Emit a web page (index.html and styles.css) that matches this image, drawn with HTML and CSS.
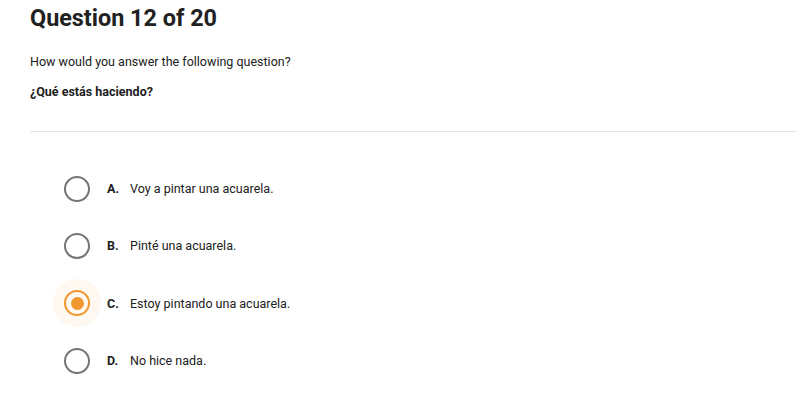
FILE: index.html
```html
<!DOCTYPE html>
<html lang="en">
<head>
<meta charset="utf-8">
<title>Question 12 of 20</title>
<link rel="stylesheet" href="styles.css">
</head>
<body>
<main class="page">
  <h1 class="title">Question 12 of 20</h1>
  <p class="prompt">How would you answer the following question?</p>
  <p class="question">¿Qué estás haciendo?</p>
  <hr class="divider">
  <ul class="options">
    <li class="option">
      <span class="radio-wrap"><span class="radio"></span></span>
      <span class="letter">A.</span>
      <span class="text">Voy a pintar una acuarela.</span>
    </li>
    <li class="option">
      <span class="radio-wrap"><span class="radio"></span></span>
      <span class="letter">B.</span>
      <span class="text">Pinté una acuarela.</span>
    </li>
    <li class="option selected">
      <span class="radio-wrap"><span class="radio"></span></span>
      <span class="letter">C.</span>
      <span class="text">Estoy pintando una acuarela.</span>
    </li>
    <li class="option">
      <span class="radio-wrap"><span class="radio"></span></span>
      <span class="letter">D.</span>
      <span class="text">No hice nada.</span>
    </li>
  </ul>
</main>
</body>
</html>
```
FILE: styles.css
```css
html, body {
  margin: 0;
  padding: 0;
  background: #ffffff;
}
body {
  font-family: Roboto, "Liberation Sans", Arial, sans-serif;
  color: #212121;
}
.page {
  padding: 0 3px 0 30px;
}
.title {
  margin: 0;
  padding-top: 5px;
  font-size: 23.4px;
  line-height: 26px;
  font-weight: 700;
  color: #212121;
}
.prompt {
  margin: 24px 0 0 0;
  font-size: 12.5px;
  line-height: 14px;
  color: #212121;
}
.question {
  margin: 16px 0 0 0;
  font-size: 12.5px;
  line-height: 14px;
  font-weight: 700;
  color: #212121;
}
.divider {
  margin: 32px 0 0 0;
  border: 0;
  height: 1px;
  background: #e2e2e2;
}
.options {
  list-style: none;
  margin: 28px 0 0 0;
  padding: 0 0 0 23px;
}
.option {
  display: flex;
  align-items: center;
  height: 57.33px;
  font-size: 12.5px;
}
.radio-wrap {
  width: 48px;
  height: 48px;
  border-radius: 50%;
  display: flex;
  align-items: center;
  justify-content: center;
  flex-shrink: 0;
}
.radio {
  width: 26px;
  height: 26px;
  box-sizing: border-box;
  border: 2.5px solid #747474;
  border-radius: 50%;
  display: flex;
  align-items: center;
  justify-content: center;
}
.selected .radio-wrap {
  background: #fef8f0;
}
.selected .radio {
  border-color: #f0972f;
}
.selected .radio::after {
  content: "";
  width: 13px;
  height: 13px;
  border-radius: 50%;
  background: #f0972f;
}
.letter {
  margin-left: 6px;
  width: 23px;
  font-weight: 700;
}
.text {
  color: #212121;
}
```
